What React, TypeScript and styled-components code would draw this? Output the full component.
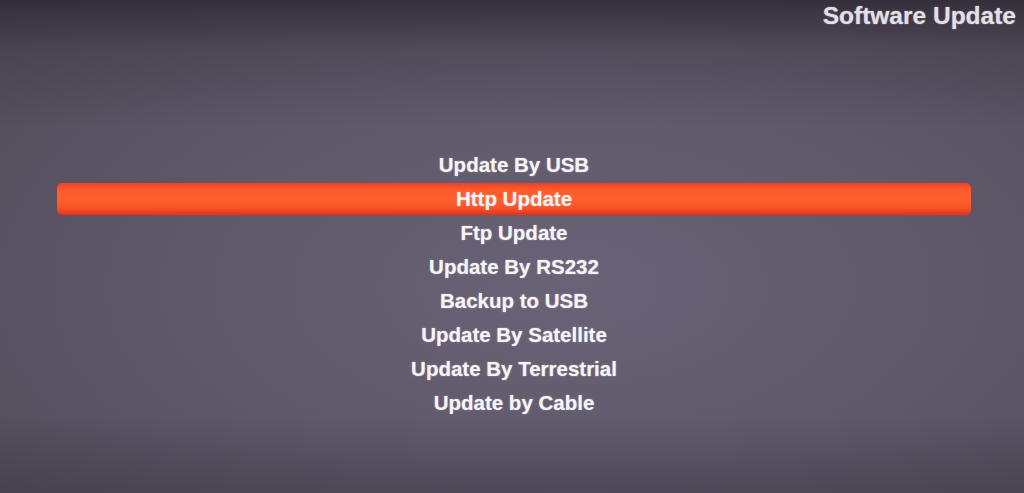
import React from 'react';
import styled, { createGlobalStyle } from 'styled-components';

const GlobalStyle = createGlobalStyle`
  html, body {
    margin: 0;
    padding: 0;
    background: #4a4553;
  }
  #root {
    height: 493px;
  }
`;

const Screen = styled.div`
  height: 493px;
  display: flex;
  flex-direction: column;
  font-family: "Liberation Sans", Arial, sans-serif;
  color: #f3f1f5;
  background:
    linear-gradient(to bottom, rgba(40, 33, 44, 0.7) 0, rgba(40, 33, 44, 0.2) 50px, rgba(40, 33, 44, 0) 130px),
    linear-gradient(to top, rgba(42, 38, 48, 0.3) 0, rgba(42, 38, 48, 0) 80px),
    radial-gradient(ellipse 75% 80% at 56% 58%, #6a6277 0%, #605a6b 45%, #56505f 80%, #514b59 100%);
  overflow: hidden;
`;

const Header = styled.div`
  display: flex;
  justify-content: flex-end;
  padding: 1px 8px 0 0;
  height: 148px;
  box-sizing: border-box;
`;

const Title = styled.div`
  font-size: 24.5px;
  font-weight: bold;
  line-height: 30px;
  color: #e2e0e6;
  text-shadow: 0 0 1.5px rgba(230, 228, 236, 0.6);
`;

const Menu = styled.div`
  display: flex;
  flex-direction: column;
  padding: 0 53px 0 57px;
`;

const Item = styled.div<{ $selected?: boolean }>`
  height: 32px;
  margin: 1px 0;
  line-height: 32px;
  text-align: center;
  font-size: 20.5px;
  font-weight: bold;
  color: #f6f4f8;
  text-shadow: 0 0 1.5px rgba(255, 255, 255, 0.55);
  border-radius: 5px;
  background: ${(p) =>
    p.$selected
      ? 'linear-gradient(to bottom, #e9432b 0%, #fd5a2b 22%, #ff5f2c 50%, #fa5227 78%, #dc351f 100%)'
      : 'transparent'};
  box-shadow: ${(p) => (p.$selected ? '0 0 2px rgba(200, 60, 40, 0.6)' : 'none')};
`;

const items = [
  'Update By USB',
  'Http Update',
  'Ftp Update',
  'Update By RS232',
  'Backup to USB',
  'Update By Satellite',
  'Update By Terrestrial',
  'Update by Cable',
];

const App = () => {
  const selected = 1;
  return (
    <>
      <GlobalStyle />
      <Screen>
        <Header>
          <Title>Software Update</Title>
        </Header>
        <Menu>
          {items.map((label, i) => (
            <Item key={label} $selected={i === selected}>
              {label}
            </Item>
          ))}
        </Menu>
      </Screen>
    </>
  );
};

export default App;
